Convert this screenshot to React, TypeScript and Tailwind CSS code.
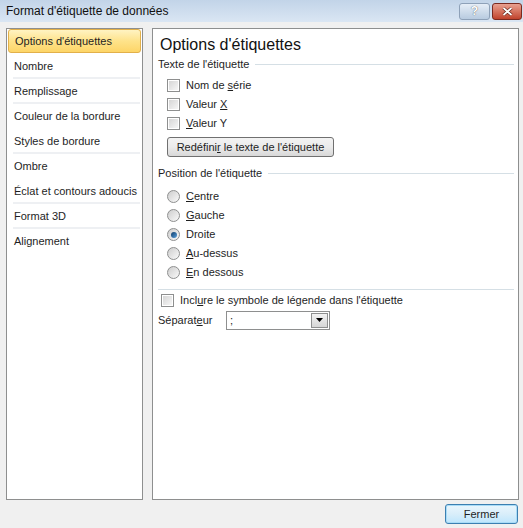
import React from 'react';

const font = { fontFamily: '"Liberation Sans", Arial, sans-serif' };

const navItems = [
  { label: "Options d'étiquettes", sep: false, selected: true },
  { label: 'Nombre', sep: true },
  { label: 'Remplissage', sep: true },
  { label: 'Couleur de la bordure', sep: false },
  { label: 'Styles de bordure', sep: true },
  { label: 'Ombre', sep: false },
  { label: 'Éclat et contours adoucis', sep: true },
  { label: 'Format 3D', sep: true },
  { label: 'Alignement', sep: false },
];

function Checkbox() {
  return (
    <span className="flex h-[13px] w-[13px] shrink-0 items-center justify-center border border-[#8e8f8f] bg-white">
      <span className="h-[9px] w-[9px] bg-gradient-to-br from-[#d6d6d6] to-[#f6f6f6]" />
    </span>
  );
}

function Radio({ checked }: { checked?: boolean }) {
  return (
    <span className="flex h-[13px] w-[13px] shrink-0 items-center justify-center rounded-full border border-[#8e8f8f] bg-gradient-to-br from-[#cdcdcd] to-[#fafafa]">
      {checked && (
        <span className="h-[6px] w-[6px] rounded-full bg-gradient-to-br from-[#0e3d6b] to-[#5aa2de]" />
      )}
    </span>
  );
}

function GroupHeader({ children }: { children: React.ReactNode }) {
  return (
    <div className="flex h-[14px] items-center">
      <span>{children}</span>
      <span className="ml-[6px] mr-[4px] h-px flex-1 bg-[#d5dfe5]" />
    </div>
  );
}

export default function App() {
  return (
    <div style={font} className="flex h-[528px] w-[523px] flex-col bg-[#f0f0f0] text-[11px] text-[#1e1e1e]">
      {/* title bar */}
      <div className="flex h-[22px] items-center bg-gradient-to-b from-[#c2d4e8] to-[#dae6f3] pl-[6px] pr-[1px]">
        <span className="flex-1 text-[12px] text-[#101010]">Format d'étiquette de données</span>
        <div className="flex gap-[2px]">
          <div className="flex h-[17px] w-[31px] items-center justify-center rounded-[3px] border border-[#8ea1b8] bg-gradient-to-b from-[#e6eef7] to-[#b8cbe0] text-[12px] font-bold text-white [text-shadow:0_0_1px_#333]">
            ?
          </div>
          <div className="flex h-[17px] w-[30px] items-center justify-center rounded-[3px] border border-[#7a2a20] bg-gradient-to-b from-[#e8a090] to-[#c0422c]">
            <svg width="11" height="9" viewBox="0 0 11 9">
              <path d="M1.5 1 L9.5 8 M9.5 1 L1.5 8" stroke="#5a1a10" strokeWidth="3" />
              <path d="M1.5 1 L9.5 8 M9.5 1 L1.5 8" stroke="#fff" strokeWidth="1.8" />
            </svg>
          </div>
        </div>
      </div>

      {/* body */}
      <div className="flex gap-[9px] pl-[6px] pt-[6px]">
        {/* left nav */}
        <div className="h-[472px] w-[137px] border border-[#8e8f8f] bg-white">
          {navItems.map((it) => (
            <div key={it.label} className="relative h-[25px]">
              {it.selected ? (
                <div className="mx-[1px] flex h-[24px] items-center rounded-[3px] border border-[#e2b04a] bg-gradient-to-b from-[#fff3c2] via-[#fee38a] to-[#fdd567] pl-[6px]">
                  {it.label}
                </div>
              ) : (
                <div className="flex h-[25px] items-center pl-[7px]">{it.label}</div>
              )}
              {it.sep && <div className="absolute bottom-0 left-[6px] right-[2px] h-[2px] bg-[#eef0f3]" />}
            </div>
          ))}
        </div>

        {/* right content */}
        <div className="flex h-[472px] w-[367px] flex-col border border-[#8e8f8f] bg-white pl-[5px] pt-[4px]">
          <div className="flex h-[24px] items-center pl-[2px] text-[16px] text-[#111]">Options d'étiquettes</div>
          <GroupHeader>Texte de l'étiquette</GroupHeader>

          <div className="mt-[5px] flex flex-col pl-[9px]">
            <label className="flex h-[19px] items-center gap-[6px]">
              <Checkbox />
              <span>
                Nom de <span className="underline">s</span>érie
              </span>
            </label>
            <label className="flex h-[19px] items-center gap-[6px]">
              <Checkbox />
              <span>
                Valeur <span className="underline">X</span>
              </span>
            </label>
            <label className="flex h-[19px] items-center gap-[6px]">
              <Checkbox />
              <span>
                <span className="underline">V</span>aleur Y
              </span>
            </label>
            <button className="mt-[4px] flex h-[20px] w-[167px] items-center justify-center rounded-[3px] border border-[#707070] bg-gradient-to-b from-[#f3f3f3] via-[#ebebeb] to-[#d8d8d8] text-[11px]">
              Redéfini<span className="underline">r</span>&nbsp;le texte de l'étiquette
            </button>
          </div>

          <div className="mt-[9px]">
            <GroupHeader>Position de l'étiquette</GroupHeader>
          </div>

          <div className="mt-[7px] flex flex-col pl-[9px]">
            {[
              ['C', 'entre', false],
              ['G', 'auche', false],
              ['', 'Droite', true],
              ['A', 'u-dessus', false],
              ['E', 'n dessous', false],
            ].map(([u, rest, checked]) => (
              <label key={String(rest)} className="flex h-[19px] items-center gap-[6px]">
                <Radio checked={checked as boolean} />
                <span>
                  <span className="underline">{u as string}</span>
                  {rest as string}
                </span>
              </label>
            ))}
          </div>

          <div className="mr-[4px] mt-[7px] h-px bg-[#d5dfe5]" />

          <label className="mt-[1px] flex h-[19px] items-center gap-[6px] pl-[3px]">
            <Checkbox />
            <span>
              Incl<span className="underline">u</span>re le symbole de légende dans l'étiquette
            </span>
          </label>

          <div className="flex h-[20px] items-center">
            <span className="w-[68px]">
              Séparat<span className="underline">e</span>ur
            </span>
            <div className="flex h-[19px] w-[104px] items-center border border-[#8e8f8f] bg-white pl-[3px]">
              <span className="flex-1">;</span>
              <span className="mr-[1px] flex h-[15px] w-[17px] items-center justify-center border border-[#8e8f8f] bg-gradient-to-b from-[#f2f2f2] to-[#d6d6d6]">
                <svg width="7" height="4" viewBox="0 0 7 4">
                  <path d="M0 0 H7 L3.5 4 Z" fill="#000" />
                </svg>
              </span>
            </div>
          </div>
        </div>
      </div>

      {/* footer */}
      <div className="flex justify-end pr-[5px] pt-[4px]">
        <button className="flex h-[20px] w-[73px] items-center justify-center rounded-[3px] border border-[#3c7fb1] bg-gradient-to-b from-[#eaf6fd] via-[#d9eefa] to-[#bee6fd] text-[11px] shadow-[inset_0_0_0_1px_#a9dcf7]">
          Fermer
        </button>
      </div>
    </div>
  );
}
